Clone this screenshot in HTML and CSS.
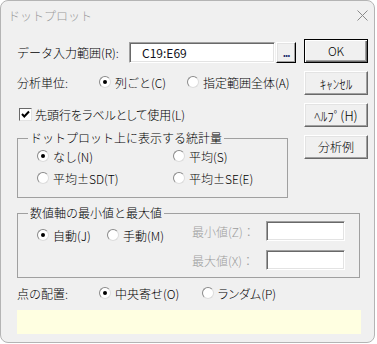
FILE: index.html
```html
<!DOCTYPE html>
<html lang="ja">
<head>
<meta charset="utf-8">
<title>ドットプロット</title>
<link rel="stylesheet" href="styles.css">
</head>
<body>
<div class="window">
  <div class="titlebar">
    <span class="title">ドットプロット</span>
    <svg class="close" width="11" height="11" viewBox="0 0 11 11"><path d="M0.5 0.5 L10.5 10.5 M10.5 0.5 L0.5 10.5" stroke="#8a8a8a" stroke-width="1" fill="none"/></svg>
  </div>
  <div class="content">
    <div class="top">
      <div class="left">
        <div class="row row-input">
          <span class="label-input">データ入力範囲(R):</span>
          <div class="textbox">C19:E69</div>
          <button class="btn btn-ref">...</button>
        </div>
        <div class="row row-unit">
          <span class="label-unit">分析単位:</span>
          <span class="opt opt-unit1"><span class="radio checked"></span>列ごと(C)</span>
          <span class="opt"><span class="radio"></span>指定範囲全体(A)</span>
        </div>
        <div class="row row-check">
          <span class="checkbox"><svg width="11" height="11" viewBox="0 0 11 11"><path d="M2 5 L4.3 7.5 L9 2.5" stroke="#000" stroke-width="2" fill="none"/></svg></span>
          <span class="prop">先頭行をラベルとして使用(L)</span>
        </div>
        <fieldset class="group group-stats">
          <legend>ドットプロット上に表示する統計量</legend>
          <div class="stats-grid">
            <span class="opt"><span class="radio checked"></span>なし(N)</span>
            <span class="opt"><span class="radio"></span>平均(S)</span>
            <span class="opt"><span class="radio"></span>平均±SD(T)</span>
            <span class="opt"><span class="radio"></span>平均±SE(E)</span>
          </div>
        </fieldset>
      </div>
      <div class="buttons">
        <button class="btn btn-side btn-default">OK</button>
        <button class="btn btn-side btn-hw">ｷｬﾝｾﾙ</button>
        <button class="btn btn-side btn-hw">ﾍﾙﾌﾟ(H)</button>
        <button class="btn btn-side">分析例</button>
      </div>
    </div>
    <fieldset class="group group-axis">
      <legend>数値軸の最小値と最大値</legend>
      <div class="axis-body">
        <div class="axis-radios">
          <span class="opt axis-opt1"><span class="radio checked"></span>自動(J)</span>
          <span class="opt"><span class="radio"></span>手動(M)</span>
        </div>
        <div class="axis-limits">
          <span class="disabled">最小値(Z)：</span>
          <div class="field"></div>
          <span class="disabled">最大値(X)：</span>
          <div class="field"></div>
        </div>
      </div>
    </fieldset>
    <div class="row row-place">
      <span class="label-unit">点の配置:</span>
      <span class="opt opt-place1"><span class="radio checked"></span>中央寄せ(O)</span>
      <span class="opt"><span class="radio"></span><span class="prop">ランダム(P)</span></span>
    </div>
    <div class="status"></div>
  </div>
</div>
</body>
</html>
```
FILE: styles.css
```css
body {
  margin: 0;
  background: #ffffff;
  font: 300 12px "Noto Sans CJK JP", sans-serif;
  color: #000;
}

.window {
  box-sizing: border-box;
  width: 375px;
  height: 343px;
  border: 1px solid #b4b4b4;
  border-radius: 8px;
  background: #f0f0f0;
  overflow: hidden;
}

.titlebar {
  height: 29px;
  display: flex;
  align-items: center;
  padding: 0 6px 0 7px;
}

.title {
  color: #9a9a9a;
}

.close {
  margin-left: auto;
}

.content {
  padding: 0 16px;
}

.top {
  display: flex;
  align-items: flex-start;
}

.left {
  width: 280px;
  display: flex;
  flex-direction: column;
}

.row {
  display: flex;
  align-items: center;
  height: 20px;
}

.row-input {
  margin-top: 12px;
  height: 21px;
}

.label-input {
  width: 112px;
  flex: none;
}

.prop {
  font-feature-settings: "palt";
}

.textbox {
  box-sizing: border-box;
  width: 146px;
  height: 21px;
  background: #fff;
  border: 1px solid;
  border-color: #a0a0a0 #fff #fff #a0a0a0;
  box-shadow: inset 1px 1px #696969, inset -1px -1px #e3e3e3;
  padding-left: 12px;
  display: flex;
  align-items: center;
  color: #101020;
  font-weight: 400;
}

.btn {
  box-sizing: border-box;
  font: inherit;
  color: #000;
  background: #f0f0f0;
  border: 1px solid;
  border-color: #fff #696969 #696969 #fff;
  box-shadow: inset -1px -1px #a0a0a0, inset 1px 1px #e3e3e3;
  padding: 0;
  line-height: 1;
}

.btn-hw {
  font-size: 13px;
}

.btn-ref {
  width: 20px;
  height: 21px;
  margin-left: 1px;
  border-color: #fff #000 #000 #fff;
  color: #1a2a6a;
  font-size: 10px;
  letter-spacing: -1px;
  font-weight: 700;
}

.row-unit {
  margin-top: 9px;
}

.label-unit {
  width: 82px;
  flex: none;
}

.opt {
  display: flex;
  align-items: center;
  gap: 4px;
  white-space: nowrap;
}

.opt-unit1 {
  width: 88px;
}

.row-check {
  margin-top: 12px;
  padding-left: 2px;
  gap: 3px;
}

.checkbox {
  box-sizing: border-box;
  width: 13px;
  height: 13px;
  background: #fff;
  border: 1px solid;
  border-color: #696969 #e3e3e3 #e3e3e3 #696969;
  display: flex;
  align-items: center;
  justify-content: center;
}

.radio {
  box-sizing: border-box;
  width: 12px;
  height: 12px;
  border-radius: 50%;
  background: #fff;
  border: 1px solid;
  border-color: #8a8a8a #dcdcdc #dcdcdc #8a8a8a;
  position: relative;
  flex: none;
}

.radio.checked::after {
  content: "";
  position: absolute;
  left: 3px;
  top: 3px;
  width: 4px;
  height: 4px;
  border-radius: 50%;
  background: #000;
}

.group {
  box-sizing: border-box;
  margin: 0;
  min-width: 0;
  padding: 0 0 9px 10px;
  border: 1px solid #a0a0a0;
}

.group legend {
  padding: 0 2px;
  line-height: 16px;
}

.group-stats {
  margin-top: 6px;
  width: 271px;
}

.stats-grid {
  display: grid;
  grid-template-columns: 136px auto;
  grid-auto-rows: 20px;
  row-gap: 2px;
  margin-left: 9px;
  align-items: center;
}

.buttons {
  margin-left: 8px;
  margin-top: 9px;
  display: flex;
  flex-direction: column;
  gap: 8px;
}

.btn-side {
  width: 64px;
  height: 24px;
}

.btn-default {
  border-color: #000;
  box-shadow: inset 1px 1px #fff, inset -1px -1px #696969, inset -2px -2px #a0a0a0;
}

.group-axis {
  margin-top: 7px;
  width: 343px;
  padding: 0 14px 7px 10px;
}

.axis-body {
  display: flex;
  margin-left: 9px;
}

.axis-radios {
  display: flex;
  align-items: center;
  height: 20px;
  margin-top: 4px;
}

.axis-opt1 {
  width: 70px;
}

.axis-limits {
  margin-left: auto;
  display: grid;
  grid-template-columns: 74px 79px;
  grid-auto-rows: 20px;
  row-gap: 9px;
  align-items: center;
}

.disabled {
  color: #9d9d9d;
}

.field {
  box-sizing: border-box;
  height: 20px;
  background: #fff;
  border: 1px solid;
  border-color: #a0a0a0 #fff #fff #a0a0a0;
  box-shadow: inset 1px 1px #696969, inset -1px -1px #e3e3e3;
}

.row-place {
  margin-top: 5px;
}

.opt-place1 {
  width: 103px;
}

.status {
  margin-top: 7px;
  height: 24px;
  width: 344px;
  background: #ffffe1;
}
```
